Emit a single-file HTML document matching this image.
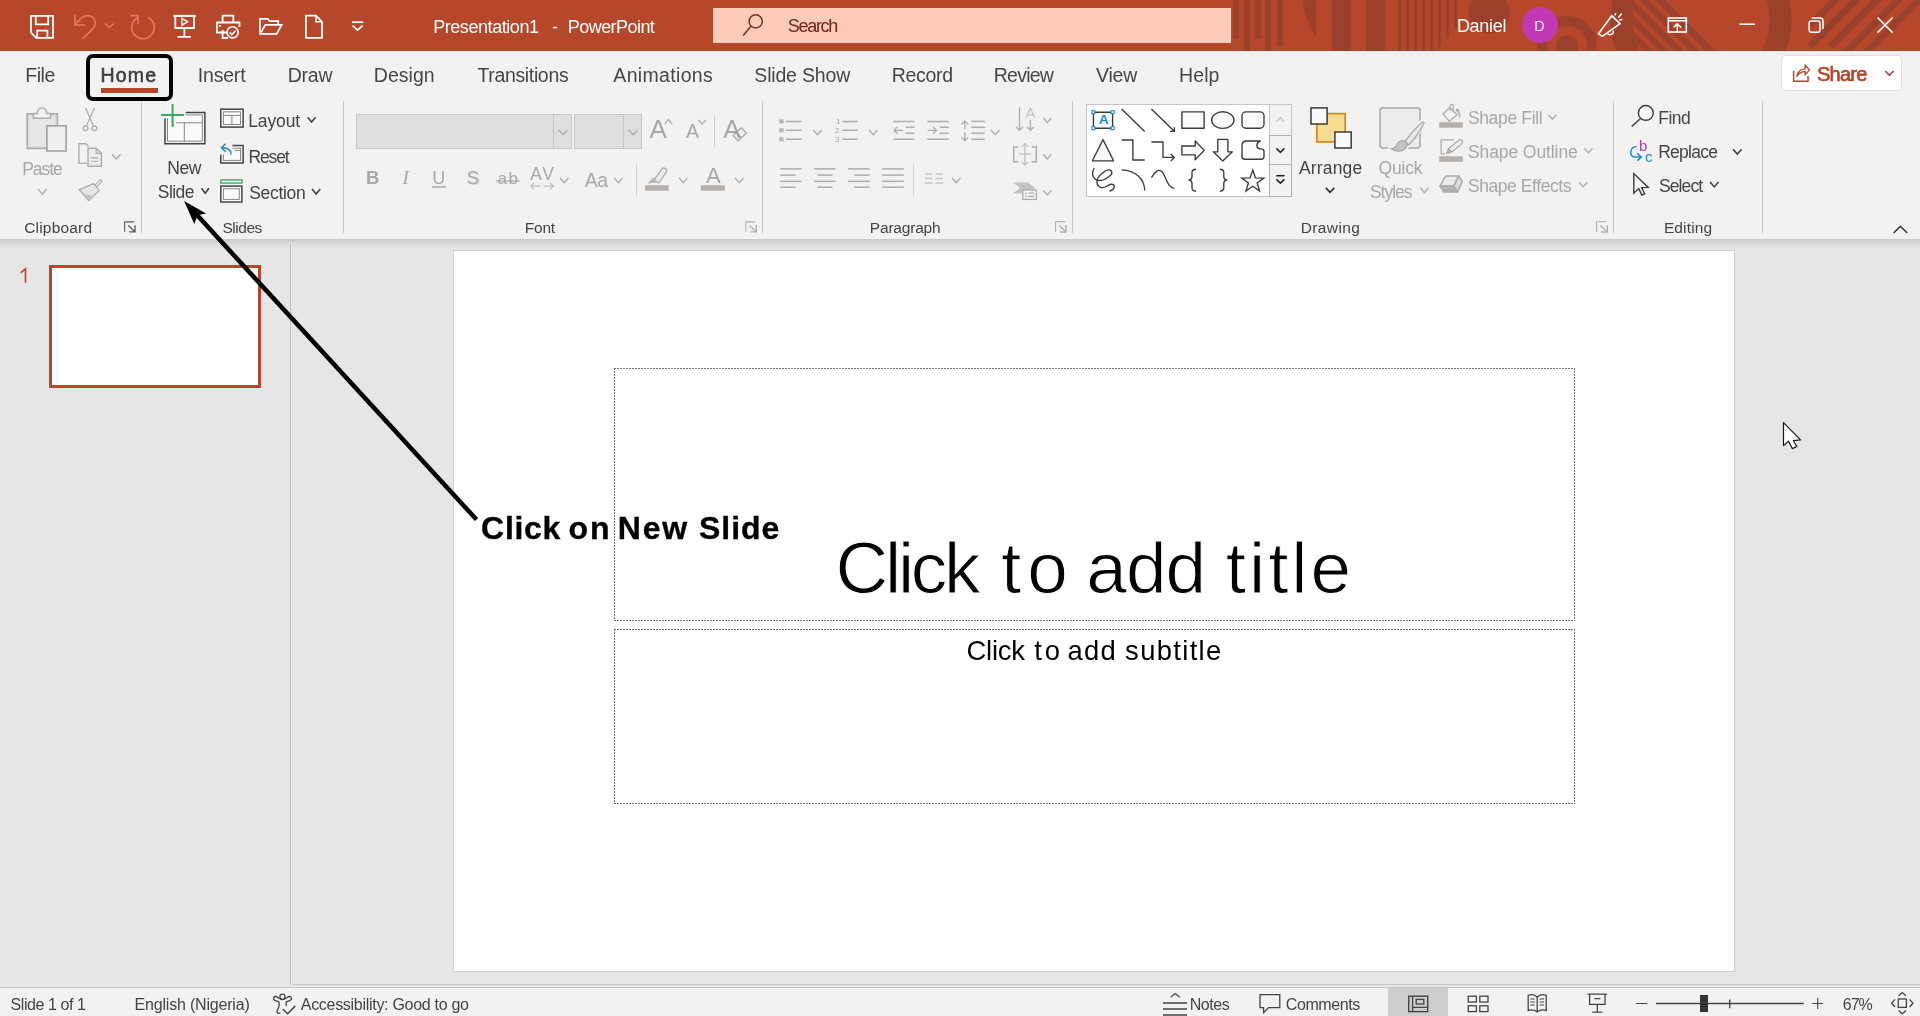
<!DOCTYPE html>
<html><head><meta charset="utf-8"><title>PowerPoint</title>
<style>
html,body{margin:0;padding:0;}
body{width:1920px;height:1016px;overflow:hidden;position:relative;background:#e6e6e6;font-family:'Liberation Sans',sans-serif;}
.a{position:absolute;}
.t{position:absolute;white-space:pre;line-height:1;}
#titlebar{left:0;top:0;width:1920px;height:51px;background:#b7472a;}
#search{left:713px;top:8px;width:518px;height:35px;background:#fdcbb8;}
#ribbon{left:0;top:51px;width:1920px;height:188px;background:#f3f2f1;}
#rshadow{left:0;top:239px;width:1920px;height:10px;background:linear-gradient(#cbc9c7,#d5d5d5 30%,#dedede 60%,#e6e6e6);}
.gsep{position:absolute;top:101px;width:1px;height:132px;background:#c8c6c4;}
.ssep{position:absolute;width:1px;background:#d2d0ce;}
#homebox{left:86px;top:54px;width:87px;height:47px;box-sizing:border-box;border:4px solid #000;border-radius:7px;}
#homeul{left:101px;top:88px;width:57px;height:5px;background:#b7472a;}
#share{left:1781px;top:55px;width:121px;height:36px;box-sizing:border-box;background:#fff;border:1px solid #e1dfdd;border-radius:4px;}
.combo{position:absolute;top:114px;height:35px;box-sizing:border-box;background:#e1dfdd;border:1px solid #c8c6c4;}
#gallery{left:1086px;top:104px;width:206px;height:93px;box-sizing:border-box;background:#fff;border:1px solid #c8c6c4;}
.gbtn{position:absolute;left:1269px;width:23px;box-sizing:border-box;background:#f3f2f1;border:1px solid #c8c6c4;}
#psep{left:290px;top:242px;width:1px;height:743px;background:#bcbcbc;box-shadow:-1px 0 0 #e9e9e9,1px 0 0 #e9e9e9;}
#hline{left:293px;top:984px;width:1627px;height:1px;background:#c6c6c6;}
#slide{left:453px;top:250px;width:1282px;height:722px;box-sizing:border-box;background:#fff;border:1px solid #cfcfcf;}
#thumb{left:49px;top:265px;width:212px;height:123px;box-sizing:border-box;background:#fff;border:3px solid #b7472a;}
#status{left:0;top:987px;width:1920px;height:29px;background:#f3f2f1;border-top:1px solid #c6c6c6;box-sizing:border-box;}
#viewsel{left:1388px;top:988px;width:60px;height:28px;background:#cfcdcb;}
svg{position:absolute;left:0;top:0;overflow:visible;}
</style></head>
<body>
<div class="a" id="titlebar"></div>
<svg class="a" width="1920" height="51" viewBox="0 0 1920 51" style="overflow:hidden">
<defs>
<clipPath id="cpA"><rect x="1290" y="0" width="26" height="51"/></clipPath>
<clipPath id="cpB"><polygon points="1390,0 1479,0 1436.2,51 1390,51"/></clipPath>
<clipPath id="cpC"><circle cx="1701" cy="20" r="68.5"/></clipPath>
</defs>
<g fill="#9b412b">
<rect x="1233" y="0" width="6" height="39"/>
<rect x="1244" y="0" width="6" height="51"/>
<rect x="1255" y="0" width="6" height="39"/>
<rect x="1265" y="0" width="6" height="51"/>
<rect x="1277" y="0" width="6" height="46"/>
<circle cx="1375" cy="-5" r="72.3" clip-path="url(#cpA)"/>
<rect x="1332" y="0" width="19" height="51"/><rect x="1366" y="0" width="19" height="51"/>
<g clip-path="url(#cpB)">
<rect x="1398.1" y="0" width="2.9" height="51"/>
<rect x="1406.1" y="0" width="2.9" height="51"/>
<rect x="1414.1" y="0" width="2.9" height="51"/>
<rect x="1422.1" y="0" width="2.9" height="51"/>
<rect x="1430.1" y="0" width="2.9" height="51"/>
<rect x="1438.1" y="0" width="2.9" height="51"/>
<rect x="1446.1" y="0" width="2.9" height="51"/>
<rect x="1454.1" y="0" width="2.9" height="51"/>
</g>
<circle cx="1489" cy="13" r="20.7"/>
<circle cx="1567" cy="46" r="11"/>
</g>
<circle cx="1567" cy="46" r="25" fill="none" stroke="#9b412b" stroke-width="10"/>
<circle cx="1701" cy="20" r="79.55" fill="none" stroke="#9b412b" stroke-width="22.1"/>
<g clip-path="url(#cpC)" fill="#9b412b">
<polygon points="1649.7,-5 1660.3,-5 1725.3,60 1714.7,60"/>
<polygon points="1634.4,-5 1643.1,-5 1708.1,60 1699.4,60"/>
<polygon points="1619.1,-5 1627.8,-5 1692.8,60 1684.1,60"/>
<polygon points="1603.8,-5 1612.5,-5 1677.5,60 1668.8,60"/>
<polygon points="1588.5,-5 1597.2,-5 1662.2,60 1653.5,60"/>
<polygon points="1573.2,-5 1581.9,-5 1646.9,60 1638.2,60"/>
</g>
<g fill="#9b412b">
<polygon points="1835,-5 1845,-5 1812.50,27.50 1807.50,22.50"/>
<polygon points="1856,-5 1866,-5 1811.75,49.25 1806.75,44.25"/>
<polygon points="1877,-5 1887,-5 1833.00,49.00 1828.00,44.00"/>
<polygon points="1898,-5 1908,-5 1843,60 1833,60"/>
<polygon points="1919,-5 1929,-5 1864,60 1854,60"/>
</g>
</svg>
<div class="a" id="search"></div>
<div class="a" style="left:1522px;top:7px;width:36px;height:36px;border-radius:50%;background:#c239b3"></div>
<div class="a" id="ribbon"></div>
<div class="a" id="rshadow"></div>
<div class="gsep" style="left:141px"></div>
<div class="gsep" style="left:343px"></div>
<div class="gsep" style="left:762px"></div>
<div class="gsep" style="left:1072px"></div>
<div class="gsep" style="left:1613px"></div>
<div class="gsep" style="left:1762px"></div>
<div class="ssep" style="left:714px;top:115px;height:33px"></div>
<div class="ssep" style="left:636px;top:164px;height:32px"></div>
<div class="ssep" style="left:913px;top:164px;height:32px"></div>
<div class="a" id="homeul"></div>
<div class="a" id="share"></div>
<div class="combo" style="left:356px;width:216px"></div><div class="ssep" style="left:553px;top:115px;height:33px;background:#c8c6c4"></div>
<div class="combo" style="left:574px;width:68px"></div><div class="ssep" style="left:623px;top:115px;height:33px;background:#c8c6c4"></div>
<div class="a" id="gallery"></div>
<div class="gbtn" style="top:104px;height:32px"></div><div class="gbtn" style="top:135px;height:30px;border-color:#b3b0ad"></div><div class="gbtn" style="top:164px;height:33px;border-color:#b3b0ad"></div>
<div class="a" id="psep"></div><div class="a" id="hline"></div>
<div class="a" id="slide"></div>
<div class="a" id="thumb"></div>
<div class="a" id="status"></div><div class="a" id="viewsel"></div>
<svg class="a" width="1920" height="1016" viewBox="0 0 1920 1016" fill="none" stroke-linecap="butt" stroke-linejoin="miter">
<g stroke="#fff" stroke-width="1.8">
<path d="M31,15.9 H53 V37.9 H36.2 L31,32.7 Z"/>
<path d="M35.8,16 V24.3 H48.2 V16"/>
<path d="M37.2,38 V30.6 H47.4 V38"/>
<path d="M173.3,15.9 H195.8" stroke-width="2"/>
<path d="M175.3,16 V28 H194 V16"/>
<path d="M184.4,28 V36.9 M177.5,36.9 H190.9"/>
<path d="M181.9,18.4 L187.6,21.8 L181.9,25.2 Z" stroke-width="1.4"/>
<path d="M222.6,22.4 V15.7 H233.3 V22.4"/>
<path d="M227,32.5 H216.9 V22.5 H239.5 V27"/>
<path d="M222.6,30 V38 H228"/>
<circle cx="232.6" cy="32.3" r="5.6" stroke-width="1.6"/>
<path d="M229.6,32.4 L231.8,34.6 L235.8,30.4" stroke-width="1.5"/>
<path d="M259.9,33.6 V18.9 H267.8 L269.6,21.2 H278.2 V24.4"/>
<path d="M260.2,33.9 L265.3,24.9 H281.6 L276.7,33.9 Z"/>
<path d="M305.9,15.7 H316 L322,21.8 V37.9 H305.9 Z"/>
<path d="M316,15.7 V21.8 H322" stroke-width="1.5"/>
<path d="M352,22.2 H363.2" stroke-width="1.7"/>
<path d="M352.6,25.6 L357.6,30.2 L362.6,25.6" stroke-width="1.6"/>
</g>
<rect x="219" y="25" width="1.8" height="1.8" fill="#fff"/>
<g stroke="#e9755e" stroke-width="1.7">
<path d="M75,14.8 V25 H84.8"/>
<path d="M75.6,24.4 C79.5,18.6 83.6,15.6 87.9,15.6 C92.2,15.6 95.3,19 95.3,23 C95.3,26.3 93.3,28.6 90.8,30.9 L82.4,38.8"/>
<path d="M105,23.4 L109.3,27.8 L113.6,23.4" stroke-width="1.5"/>
<path d="M130.2,15.6 H138 V23.8"/>
<path d="M138.3,17.3 A11.2,11.2 0 1 0 148.3,17.6"/>
</g>
<g stroke="#7a2d1c" stroke-width="1.5"><circle cx="755.7" cy="21.4" r="6.6"/><path d="M751,26.2 L743.2,35.4"/></g>
<g stroke="#fff" stroke-width="1.6">
<path d="M1598.5,33.8 L1611.8,15.8 L1620,23.6 L1602.4,36.4 Z"/>
<path d="M1613.2,30.6 A3.2,3.2 0 0 1 1607.3,33" stroke-width="1.4"/>
<path d="M1614.7,15.4 L1615.9,13 M1618.4,17.4 L1621.8,13.4 M1619.2,20 L1622.4,19.4" stroke-width="1.5"/>
<rect x="1668.3" y="18" width="18" height="14"/>
<path d="M1668.3,20.8 H1686.3"/>
<path d="M1677.3,24 V32 M1673.6,27.4 L1677.3,23.7 L1681,27.4" stroke-width="1.5"/>
<path d="M1739.5,24.2 H1755" stroke-width="1.5"/>
<rect x="1809.1" y="21" width="11" height="11.2" rx="2.2" stroke-width="1.5"/>
<path d="M1811.8,18 H1820 Q1823,18 1823,21 V29.2" stroke-width="1.5"/>
<path d="M1877.5,17.5 L1892.6,32.6 M1892.6,17.5 L1877.5,32.6" stroke-width="1.5"/>
</g>
<g stroke="#b7472a" stroke-width="1.5">
<path d="M1793.6,70.8 V81.3 H1808 V76"/>
<path d="M1796.6,76.6 C1797.6,71.6 1800.6,69 1805.2,68.8 V65.2 L1809.6,70 L1805.2,74.6 V71.6 C1801.4,71.6 1798.6,73.2 1796.6,76.6 Z" stroke-width="1.3"/>
<path d="M1885.2,71 L1889.4,75.4 L1893.6,71" stroke-width="1.6"/>
</g>
<rect x="27.2" y="113.8" width="30.2" height="34.6" fill="#dfdddb" stroke="#aeacaa" stroke-width="1.6"/>
<rect x="29.8" y="116.4" width="25" height="29.4" fill="#e9e8e6"/>
<path d="M33.4,118.2 V113.4 H37.4 V112.5 A4.6,4.6 0 0 1 46.6,112.5 V113.4 H50.6 V118.2 Z" fill="#f3f2f1" stroke="#aeacaa" stroke-width="1.5"/>
<rect x="46.9" y="125.8" width="19.2" height="25.2" fill="#efeeed" stroke="#a6a4a2" stroke-width="1.7"/>
<path d="M38.20,189.30 L42.35,194.10 L46.50,189.30" stroke="#aeacaa" stroke-width="1.4"/>
<g stroke="#aeacaa" stroke-width="1.3"><path d="M85.6,108 L93.4,125.8 M94.4,108 L86.6,125.8"/><circle cx="85.6" cy="128.2" r="2.4"/><circle cx="94.4" cy="128.2" r="2.4"/></g>
<g stroke="#aeacaa" stroke-width="1.4">
<path d="M87,163.4 H78.9 V143.8 H86 L88.6,146.4"/>
<path d="M88,148.2 H96.2 L101.4,153.4 V166.2 H88 Z" fill="#efeeed"/>
<path d="M96.2,148.2 V153.4 H101.4" stroke-width="1.2"/>
<path d="M90.8,157.9 H98.2 M90.8,161.3 H98.2" stroke-width="1.1"/>
</g>
<path d="M112.00,154.20 L116.30,159.00 L120.60,154.20" stroke="#aeacaa" stroke-width="1.4"/>
<g stroke="#aeacaa">
<path d="M94.4,187.4 L100.6,181" stroke-width="3.6" stroke-linecap="round"/>
<path d="M94.4,187.4 L100.6,181" stroke="#efeeed" stroke-width="1.4" stroke-linecap="round"/>
<path d="M79.2,189.8 L93.6,183.6 L99.2,190.6 L88.6,200.6 Z" fill="#e6e5e3" stroke-width="1.3" stroke-linejoin="round"/>
<path d="M81.6,192.6 L92.6,196.4 L88.6,200.2 Z" fill="#c8c6c4" stroke="none"/>
</g>
<path d="M124.65,231.80 V221.85 H134.10" stroke="#5a5856" stroke-width="1.1"/><path d="M128.30,225.50 L134.80,231.70" stroke="#5a5856" stroke-width="1.3"/><path d="M129.10,231.90 H135.00 V225.30" stroke="#5a5856" stroke-width="1.4"/>
<rect x="166.9" y="114.4" width="35.8" height="27" fill="#fafafa"/>
<path d="M185.6,112.4 H204.9 V143.7 H165 V118.4" stroke="#444444" stroke-width="1.5"/>
<path d="M185.6,114.9 H202.4 V141.2 H167.5 V118.4" stroke="#8a8886" stroke-width="1"/>
<path d="M176,122.8 H202.4 M184.3,122.8 V141.2" stroke="#8a8886" stroke-width="1"/>
<path d="M172.6,104.1 V126.9 M161.3,114.9 H183.9" stroke="#37a660" stroke-width="2"/>
<path d="M201.50,188.20 L205.25,193.20 L209.00,188.20" stroke="#444444" stroke-width="1.6"/>
<rect x="220.80" y="109.20" width="22.30" height="17.90" fill="#fafafa" stroke="#444444" stroke-width="1.5"/><rect x="223.40" y="111.80" width="17.10" height="12.70" stroke="#8a8886" stroke-width="1"/>
<path d="M223.4,115.4 H240.5 M231.9,115.4 V124.5" stroke="#8a8886" stroke-width="1"/>
<path d="M307.60,117.20 L311.60,122.00 L315.60,117.20" stroke="#444444" stroke-width="1.6"/>
<path d="M232,145.5 H243.1 V163 H220.8 V154" stroke="#444444" stroke-width="1.5" fill="none"/>
<rect x="223.4" y="148.2" width="17.1" height="12.2" fill="#fafafa" stroke="#8a8886" stroke-width="1"/>
<rect x="220" y="143" width="12.4" height="11.6" fill="#f3f2f1"/>
<path d="M234.4,150.4 H240.2" stroke="#8a8886" stroke-width="1"/>
<path d="M231.2,154.6 C231.2,150.6 228.2,147.8 222,147.8 M225.6,143.8 L221.4,147.8 L225.6,151.8" stroke="#1e8ad2" stroke-width="1.5"/>
<rect x="220.8" y="179.9" width="21.2" height="3.2" fill="#fff" stroke="#37a660" stroke-width="1.3"/>
<rect x="220.80" y="186.10" width="21.10" height="15.90" fill="#fafafa" stroke="#444444" stroke-width="1.5"/><rect x="223.40" y="188.70" width="15.90" height="10.70" stroke="#8a8886" stroke-width="1"/>
<path d="M312.00,188.90 L316.15,194.00 L320.30,188.90" stroke="#444444" stroke-width="1.6"/>
<path d="M559.00,130.00 L563.25,134.70 L567.50,130.00" stroke="#aeacaa" stroke-width="1.4"/>
<path d="M628.90,130.00 L633.15,134.70 L637.40,130.00" stroke="#aeacaa" stroke-width="1.4"/>
<path d="M664.7,124.1 L668.5,119.5 L672.3,124.1" stroke="#aeacaa" stroke-width="1.3"/>
<path d="M698.40,120.00 L702.20,124.10 L706.00,120.00" stroke="#aeacaa" stroke-width="1.3"/>
<path d="M733.2,135.6 L741.4,127.8 L746.4,133 L738.2,140.8 Z" fill="#f3f2f1" stroke="#aeacaa" stroke-width="1.4"/>
<path d="M736.6,132.6 L741.6,137.8" stroke="#aeacaa" stroke-width="1.3"/>
<path d="M432.2,187 H445.9" stroke="#aeacaa" stroke-width="1.6"/>
<path d="M495.9,181 H519.7" stroke="#aeacaa" stroke-width="1.3"/>
<path d="M530.8,186.1 H540.8 M534,183 L530.8,186.1 L534,189.2 M543.4,186.1 H553.4 M550.2,183 L553.4,186.1 L550.2,189.2" stroke="#bebcba" stroke-width="1.2"/>
<path d="M560.00,177.90 L564.25,182.70 L568.50,177.90" stroke="#aeacaa" stroke-width="1.4"/>
<path d="M614.00,177.90 L618.35,182.70 L622.70,177.90" stroke="#aeacaa" stroke-width="1.4"/>
<path d="M654.2,179.6 L661.8,169.2 A2.6,2.6 0 0 1 666,172.6 L658.8,183 Z" fill="#eeedec" stroke="#aeacaa" stroke-width="1.3" stroke-linejoin="round"/>
<path d="M647.4,183.6 L653.2,177.6 L657.4,182.4 Z" fill="#b8b6b4"/>
<rect x="645.1" y="185.2" width="23.7" height="5.5" fill="#b3b0ad"/>
<path d="M679.20,177.90 L683.30,182.70 L687.40,177.90" stroke="#aeacaa" stroke-width="1.4"/>
<rect x="700.9" y="185.2" width="24" height="5.5" fill="#b3b0ad"/>
<path d="M735.00,177.90 L739.25,182.70 L743.50,177.90" stroke="#aeacaa" stroke-width="1.4"/>
<path d="M745.85,231.80 V221.85 H755.40" stroke="#b3b0ad" stroke-width="1.1"/><path d="M749.50,225.50 L756.10,231.70" stroke="#b3b0ad" stroke-width="1.3"/><path d="M750.30,231.90 H756.30 V225.30" stroke="#b3b0ad" stroke-width="1.4"/>
<g stroke="#aeacaa" stroke-width="1.5">
<rect x="779.2" y="119.30" width="4.4" height="4.2" fill="#b8b6b4" stroke="none"/>
<path d="M786,121.40 H801.5 M842.4,121.40 H857.6"/>
<rect x="779.2" y="128.20" width="4.4" height="4.2" fill="#b8b6b4" stroke="none"/>
<path d="M786,130.30 H801.5 M842.4,130.30 H857.6"/>
<rect x="779.2" y="137.20" width="4.4" height="4.2" fill="#b8b6b4" stroke="none"/>
<path d="M786,139.30 H801.5 M842.4,139.30 H857.6"/>
<path d="M893.2,121.4 H914.5 M893.2,139.3 H914.5 M905.6,127.3 H914.5 M905.6,133.2 H914.5"/>
<path d="M894,130.3 H902.8 M897.4,126.9 L894,130.3 L897.4,133.7" stroke-width="1.3"/>
<path d="M927.3,121.4 H948.7 M927.3,139.3 H948.7 M939.7,127.3 H948.7 M939.7,133.2 H948.7"/>
<path d="M927.6,130.3 H936.4 M933,126.9 L936.4,130.3 L933,133.7" stroke-width="1.3"/>
<path d="M971.3,121.40 H984.8"/>
<path d="M971.3,127.30 H984.8"/>
<path d="M971.3,133.20 H984.8"/>
<path d="M971.3,139.30 H984.8"/>
<path d="M964.8,121 V129.6 M964.8,132.3 V140.8 M961.4,124.4 L964.8,121 L968.2,124.4 M961.4,137.4 L964.8,140.8 L968.2,137.4" stroke-width="1.3"/>
<path d="M780.2,168.90 H801.50"/>
<path d="M814.2,168.90 H835.6"/>
<path d="M848.10,168.90 H869.7"/>
<path d="M882.1,168.90 H903.8"/>
<path d="M780.2,175.10 H795.60"/>
<path d="M817.4,175.10 H832.5"/>
<path d="M854.30,175.10 H869.7"/>
<path d="M882.1,175.10 H903.8"/>
<path d="M780.2,181.30 H801.50"/>
<path d="M814.2,181.30 H835.6"/>
<path d="M848.10,181.30 H869.7"/>
<path d="M882.1,181.30 H903.8"/>
<path d="M780.2,187.20 H795.60"/>
<path d="M817.4,187.20 H832.5"/>
<path d="M854.30,187.20 H869.7"/>
<path d="M882.1,187.20 H903.8"/>
</g>
<g stroke="#c8c6c4" stroke-width="1.5">
<path d="M924.8,174.10 H932.4 M935.5,174.10 H943"/>
<path d="M924.8,178.60 H932.4 M935.5,178.60 H943"/>
<path d="M924.8,183.10 H932.4 M935.5,183.10 H943"/>
</g>
<path d="M813.20,130.00 L817.45,134.70 L821.70,130.00" stroke="#aeacaa" stroke-width="1.4"/>
<path d="M869.00,130.00 L873.25,134.70 L877.50,130.00" stroke="#aeacaa" stroke-width="1.4"/>
<path d="M991.00,130.00 L995.25,134.70 L999.50,130.00" stroke="#aeacaa" stroke-width="1.4"/>
<path d="M952.00,177.90 L956.20,182.70 L960.40,177.90" stroke="#aeacaa" stroke-width="1.4"/>
<g stroke="#aeacaa" stroke-width="1.3">
<path d="M1019.5,107.3 V130.4 M1015.9,126.8 L1019.5,130.4 L1023.1,126.8"/>
<path d="M1030.4,119.8 V130.4 M1026.9,126.9 L1030.4,130.4 L1033.9,126.9"/>
<path d="M1025.9,118 L1030.4,108.2 L1034.9,118 M1027.4,114.8 H1033.4" stroke="#c2c0be" stroke-width="1.2"/>
<path d="M1018.3,146.9 H1013.7 V161.7 H1018.3 M1031.7,146.9 H1036.3 V161.7 H1031.7" stroke-width="1.5"/>
<path d="M1019,154.2 H1031.2 M1024.9,143.6 V165.2 M1021.6,146.9 L1024.9,143.6 L1028.2,146.9 M1021.6,161.9 L1024.9,165.2 L1028.2,161.9" stroke="#c2c0be"/>
</g>
<path d="M1013.2,182.4 H1028 L1035.2,187.9 L1028,193.4 H1013.2 L1019.9,187.9 Z" fill="#c4c2c0"/>
<rect x="1022.8" y="190" width="13.6" height="9.4" fill="#f3f2f1" stroke="#aeacaa" stroke-width="1.3"/>
<path d="M1025.2,193.2 H1027 M1028.6,193.2 H1034 M1025.2,196.3 H1027 M1028.6,196.3 H1034" stroke="#aeacaa" stroke-width="1.2"/>
<path d="M1043.30,117.80 L1047.35,122.60 L1051.40,117.80" stroke="#aeacaa" stroke-width="1.4"/>
<path d="M1043.30,154.10 L1047.35,158.90 L1051.40,154.10" stroke="#aeacaa" stroke-width="1.4"/>
<path d="M1043.30,190.40 L1047.35,195.00 L1051.40,190.40" stroke="#aeacaa" stroke-width="1.4"/>
<path d="M1055.55,231.90 V221.65 H1065.10" stroke="#b3b0ad" stroke-width="1.1"/><path d="M1059.20,225.30 L1065.80,231.80" stroke="#b3b0ad" stroke-width="1.3"/><path d="M1060.00,232.00 H1066.00 V225.10" stroke="#b3b0ad" stroke-width="1.4"/>
<g stroke="#3b3a39" stroke-width="1.35" stroke-linejoin="round">
<rect x="1093.4" y="112.2" width="19.2" height="16" fill="#fafafa"/>
<path d="M1121.6,108.9 L1144.7,131.5"/>
<path d="M1151.4,108.9 L1174.3,131.3 M1174.4,127.2 V131.4 H1170"/>
<rect x="1181.9" y="111.9" width="22.2" height="16.3" fill="#fafafa"/>
<ellipse cx="1222.8" cy="120.1" rx="11.2" ry="8.3" fill="#fafafa"/>
<rect x="1242" y="111.9" width="22" height="16.3" rx="4" fill="#fafafa"/>
<path d="M1103,139.6 L1092.4,160.8 H1113.6 Z" fill="#fafafa"/>
<path d="M1121.6,140 H1132.9 V160 H1144.7"/>
<path d="M1151.4,142 H1163 V157.4 H1174.2 M1170.8,154 L1174.3,157.4 L1170.8,160.9"/>
<path d="M1181.9,146 H1195.2 V141 L1204.2,150.4 L1195.2,159.8 V154.9 H1181.9 Z" fill="#fafafa"/>
<path d="M1217.8,139.3 H1227.9 V151.8 H1232.4 L1222.8,160.9 L1213.3,151.8 H1217.8 Z" fill="#fafafa"/>
<path d="M1246.4,141 H1260.2 C1256.4,142.4 1255.4,147.6 1259.8,148.8 H1261.4 Q1264,148.8 1264,151.6 V156.4 Q1264,159.2 1261.2,159.2 H1244.8 Q1242,159.2 1242,156.4 V145.6 Q1242,141 1246.4,141 Z" fill="#fafafa"/>
<path d="M1093.9,168.5 C1092.6,171.2 1092.2,173 1092.7,174.7 C1093.4,177.6 1094.8,179.4 1096.9,180.1 C1098.4,180.6 1099.8,180.6 1101.3,180.4 C1104.2,180 1106.8,178.4 1108.7,176.8 C1110.6,175.2 1112,174.4 1111.9,173 C1111.8,171.2 1110.6,169.8 1108.7,169.9 C1106.6,170 1104.6,171.2 1102.8,172.7 C1100.8,174.4 1099,175.8 1098,177.7 C1097.2,179.2 1096.8,180.6 1096.9,182.1 C1097,184 1097.8,185.6 1099.2,186.5 C1100.2,187.2 1101,187.6 1102.2,187.6 C1104,187.6 1105.6,186.8 1107.2,186 C1108.8,185.2 1110,184.2 1111.6,184.2 C1113,184.2 1114.2,185 1114.3,186.3 C1114.4,187.4 1113.8,188.4 1113.1,189.2 C1112.2,190.2 1111.2,190.6 1110.1,191" stroke-linecap="round"/>
<path d="M1121.6,169.8 C1135.4,170.4 1144.6,178.6 1144.7,190.6"/>
<path d="M1151.4,177.8 C1154.6,171.6 1159,168 1162.4,172.2 C1166.4,177.2 1167.4,188 1174.5,188.4"/>
<path d="M1196,169.2 C1193.2,169.2 1192,170.2 1192,172.6 V176.6 C1192,178.6 1191,179.8 1189,180 C1191,180.2 1192,181.4 1192,183.4 V187.8 C1192,190.2 1193.2,191.2 1196,191.2"/>
<path d="M1219.8,169.2 C1222.6,169.2 1223.8,170.2 1223.8,172.6 V176.6 C1223.8,178.6 1224.8,179.8 1226.8,180 C1224.8,180.2 1223.8,181.4 1223.8,183.4 V187.8 C1223.8,190.2 1222.6,191.2 1219.8,191.2"/>
<polygon points="1252.80,170.00 1255.50,177.88 1263.83,178.02 1257.17,183.02 1259.62,190.98 1252.80,186.20 1245.98,190.98 1248.43,183.02 1241.77,178.02 1250.10,177.88" fill="#fafafa" stroke-linejoin="miter"/>
</g>
<rect x="1091.90" y="110.70" width="3" height="3" fill="#fff" stroke="#1e8ad2" stroke-width="1.1"/>
<rect x="1111.10" y="110.70" width="3" height="3" fill="#fff" stroke="#1e8ad2" stroke-width="1.1"/>
<rect x="1091.90" y="126.70" width="3" height="3" fill="#fff" stroke="#1e8ad2" stroke-width="1.1"/>
<rect x="1111.10" y="126.70" width="3" height="3" fill="#fff" stroke="#1e8ad2" stroke-width="1.1"/>
<path d="M1276.6,121.8 L1280.4,117.6 L1284.2,121.8" stroke="#c8c6c4" stroke-width="1.4"/>
<path d="M1276.4,148.4 L1280.4,152.4 L1284.4,148.4" stroke="#252423" stroke-width="1.6"/>
<path d="M1276.2,175.7 H1284.6" stroke="#252423" stroke-width="1.6"/>
<path d="M1276.4,179.4 L1280.4,183.2 L1284.4,179.4" stroke="#252423" stroke-width="1.6"/>
<rect x="1316.9" y="113.6" width="28.3" height="28.3" fill="#f8dc92" stroke="#e17c05" stroke-width="1.6"/>
<rect x="1311" y="107.9" width="16.1" height="16.1" fill="#fafafa" stroke="#3b3a39" stroke-width="1.5"/>
<rect x="1334.9" y="132" width="16.3" height="16" fill="#fafafa" stroke="#3b3a39" stroke-width="1.5"/>
<path d="M1325.8,187.8 L1330,192.4 L1334.3,187.8" stroke="#252423" stroke-width="1.6"/>
<rect x="1380.1" y="108.1" width="39.9" height="39.9" rx="2.4" fill="#edecec" stroke="#aaa8a6" stroke-width="1.5"/>
<path d="M1423.6,122.6 L1407,143 M1405,146 L1392,149.6" stroke="#f3f2f1" stroke-width="8" stroke-linecap="round"/>
<path d="M1422.2,122.2 C1423.6,121.4 1424.4,122.6 1423.6,124 C1419.6,132 1414,139.8 1408.6,145 L1404.8,141.6 C1409.4,135.4 1415.6,127.6 1422.2,122.2 Z" fill="#e9e8e6" stroke="#aaa8a6" stroke-width="1.3"/>
<path d="M1406,141.9 C1402,139.5 1398.4,141 1397,144.4 C1396,147 1394,148.4 1391,148.5 C1395,151.6 1401,152 1404.6,149 C1406.8,147.2 1408,144.6 1406,141.9 Z" fill="#c6c4c2" stroke="#aaa8a6" stroke-width="1.2"/>
<path d="M1420.30,187.70 L1424.35,192.60 L1428.40,187.70" stroke="#aeacaa" stroke-width="1.4"/>
<g stroke="#aeacaa" stroke-width="1.3" stroke-linejoin="round">
<path d="M1443,113.9 L1449.8,107.6 L1457,114.8 L1449.4,121.2 Z"/>
<path d="M1450.2,110.8 V105.9 A1.5,1.5 0 0 1 1453.2,105.9 V112.2"/>
<path d="M1456.2,110.4 C1458.6,111.4 1459.8,114 1459.6,117.6 M1456.4,109.2 L1459.4,111.2" stroke-width="1.5"/>
<path d="M1454.2,139.9 H1441.1 V153.8 H1444.8"/>
<path d="M1446.9,153.5 L1448.6,148.6 L1458.9,140.2 A2.3,2.3 0 0 1 1462.1,143.4 L1451.8,152 Z" fill="#efeeed"/>
<path d="M1446.9,153.5 L1448.6,148.6 L1451.8,152 Z" fill="#b8b6b4"/>
<path d="M1445.8,175.9 H1458.6 L1453.7,186.1 H1439.9 Z" fill="#edecec" stroke-width="1.5"/>
<path d="M1458.6,175.9 L1462.4,181.2 L1457.6,192 L1453.7,186.1 Z" fill="#dddbd9" stroke-width="1.5"/>
<path d="M1439.9,186.1 H1453.7 L1457.6,192 H1443.8 Z" fill="#b5b3b1" stroke-width="1.5"/>
</g>
<rect x="1439.2" y="122.2" width="23.6" height="5.5" fill="#b3b0ad"/>
<rect x="1439.2" y="156.3" width="23.6" height="5.5" fill="#b3b0ad"/>
<path d="M1548.30,114.60 L1552.35,119.30 L1556.40,114.60" stroke="#aeacaa" stroke-width="1.4"/>
<path d="M1584.30,148.10 L1588.40,152.90 L1592.50,148.10" stroke="#aeacaa" stroke-width="1.4"/>
<path d="M1579.10,182.20 L1583.25,186.80 L1587.40,182.20" stroke="#aeacaa" stroke-width="1.4"/>
<path d="M1596.55,231.90 V221.75 H1606.40" stroke="#b3b0ad" stroke-width="1.1"/><path d="M1600.20,225.40 L1607.10,231.80" stroke="#b3b0ad" stroke-width="1.3"/><path d="M1601.00,232.00 H1607.30 V225.20" stroke="#b3b0ad" stroke-width="1.4"/>
<g stroke="#3b3a39" stroke-width="1.4">
<circle cx="1645.8" cy="112.9" r="7.4" fill="#fafafa"/>
<path d="M1640.6,118.4 L1631.6,126.6"/>
<path d="M1633.8,173.6 V193.2 L1638.8,188.6 L1641.8,195 L1644.6,193.8 L1641.6,187.6 L1648.2,187.4 Z" fill="#fafafa" stroke-linejoin="miter"/>
</g>
<path d="M1636.6,146.6 C1630.2,146.8 1628.6,155.4 1634.4,157 H1641 M1637.4,153.4 L1641.2,157 L1637.4,160.6" stroke="#1e8ad2" stroke-width="1.5"/>
<path d="M1733.00,149.20 L1737.30,154.10 L1741.60,149.20" stroke="#3b3a39" stroke-width="1.5"/>
<path d="M1710.10,182.00 L1714.30,186.90 L1718.50,182.00" stroke="#3b3a39" stroke-width="1.5"/>
<path d="M1893.6,233 L1900.4,226.2 L1907.2,233" stroke="#323130" stroke-width="1.5"/>
<g stroke="#6f6f6f" stroke-width="1" stroke-dasharray="2 1" shape-rendering="crispEdges">
<path d="M614,368.5 H1575 M614,620.5 H1575 M614.5,368 V621 M1574.5,368 V621"/>
<path d="M614,629.5 H1575 M614,803.5 H1575 M614.5,629 V804 M1574.5,629 V804"/>
</g>
<path d="M476.5,519.6 L197.9,216" stroke="#000" stroke-width="4.5"/>
<path d="M184.1,201 L206.1,213.4 L199.6,214.7 L196.4,218.2 L194.3,224.1 Z" fill="#000"/>
<path d="M20.6,272.9 L25.5,268.9 V282.8" stroke="#c8452a" stroke-width="1.7"/>
<path d="M1783.5,422.6 V445.6 L1788.5,441.2 L1792.3,448.6 L1796.8,446.5 L1793.3,440.7 L1800.6,439.9 Z" fill="#fff" stroke="#15151f" stroke-width="1.2" stroke-linejoin="round"/>
<g stroke="#444444" stroke-width="1.3">
<circle cx="282.5" cy="996.8" r="2.6"/>
<path d="M279,1001.8 L275,1000.4 C272.6,999.4 273.2,996.3 275.7,996.5 C277.7,996.7 279.6,999.6 282.5,999.6 C285.4,999.6 287.3,996.7 289.3,996.5 C291.8,996.3 292.4,999.4 290,1000.4 L286.2,1001.8 V1006.2" stroke-linejoin="round"/>
<path d="M279,1001.8 C279.5,1004 279.4,1005.6 278.6,1007.6 C277.6,1010 276.2,1011.3 277.2,1012.6 C278,1013.7 279.5,1013.5 280.4,1012.6"/>
<path d="M282.9,1008.9 L287.6,1013.7 L295.3,1005.9" stroke-width="1.5"/>
<path d="M1170.6,997.2 L1175.2,993.6 L1179.8,997.2"/>
<path d="M1163,1003 H1187 M1163,1009 H1187 M1163,1015 H1187" stroke-width="1.5"/>
<path d="M1260,994.6 H1279.8 V1007.6 H1268.6 L1263.6,1012.6 V1007.6 H1260 Z"/>
<rect x="1408.7" y="996.2" width="19" height="15.4" stroke-width="1.4"/>
<path d="M1412.6,996.2 V1011.6 M1412.6,1007.4 H1427.6"/>
<rect x="1416.2" y="999.4" width="7.6" height="4.6"/>
<rect x="1468.2" y="996.2" width="8.2" height="5.8"/>
<rect x="1468.2" y="1005.8" width="8.2" height="5.8"/>
<rect x="1479.8" y="996.2" width="8.2" height="5.8"/>
<rect x="1479.8" y="1005.8" width="8.2" height="5.8"/>
<path d="M1537.2,997 C1534,994.4 1530.6,994.4 1528.2,995.4 V1010.6 C1530.6,1009.6 1534,1009.6 1537.2,1012 C1540.4,1009.6 1543.8,1009.6 1546.2,1010.6 V995.4 C1543.8,994.4 1540.4,994.4 1537.2,997 Z M1537.2,997 V1012"/>
<path d="M1530.4,999 H1534.8 M1530.4,1002 H1534.8 M1530.4,1005 H1534.8 M1539.6,999 H1544 M1539.6,1002 H1544 M1539.6,1005 H1544" stroke-width="1"/>
<path d="M1587.6,994.2 H1607 M1589.6,994.4 V1004.4 H1605 V994.4 M1597.3,1004.4 V1012.2 M1592.2,1012.2 H1602.4 M1594.4,998.6 H1600.4"/>
<path d="M1636,1003.5 H1647.2 M1812.2,1003.5 H1823.2 M1817.7,998 V1009" stroke-width="1.1"/>
<path d="M1656,1003.5 H1803.8 M1729.7,999.6 V1008.2" stroke-width="1.4"/>
<rect x="1898.2" y="999" width="8.2" height="8.4"/>
<path d="M1898.6,995.8 L1902.3,992.6 L1906,995.8 M1898.6,1010.6 L1902.3,1013.8 L1906,1010.6 M1895,999.4 L1891.6,1003.2 L1895,1007 M1909.6,999.4 L1913,1003.2 L1909.6,1007"/>
</g>
<rect x="1700" y="995" width="8" height="17" fill="#333"/>
</svg>
<div class="a" style="left:0;top:0;width:1920px;height:1016px;will-change:transform">
<span class="t" style="left:433.20px;top:18.00px;font-size:18px;letter-spacing:-0.442px;color:#fff;">Presentation1</span>
<span class="t" style="left:552.00px;top:18.00px;font-size:18px;letter-spacing:0px;color:#fff;">-</span>
<span class="t" style="left:567.80px;top:18.00px;font-size:18px;letter-spacing:-0.556px;color:#fff;">PowerPoint</span>
<span class="t" style="left:787.80px;top:17.00px;font-size:18px;letter-spacing:-1.3px;color:#70261a;">Search</span>
<span class="t" style="left:1456.90px;top:17.00px;font-size:18px;letter-spacing:-0.3px;color:#fff;">Daniel</span>
<span class="t" style="left:1534.20px;top:18.70px;font-size:14.5px;letter-spacing:0px;color:#fbe9f8;">D</span>
<span class="t" style="left:25.30px;top:66.00px;font-size:19.5px;letter-spacing:-0.467px;color:#484644;">File</span>
<span class="t" style="left:100.50px;top:66.00px;font-size:19.5px;letter-spacing:1.167px;color:#3b3a39;-webkit-text-stroke:0.6px #444;">Home</span>
<span class="t" style="left:197.80px;top:66.00px;font-size:19.5px;letter-spacing:-0.2px;color:#484644;">Insert</span>
<span class="t" style="left:287.80px;top:66.00px;font-size:19.5px;letter-spacing:-0.267px;color:#484644;">Draw</span>
<span class="t" style="left:373.80px;top:66.00px;font-size:19.5px;letter-spacing:0.02px;color:#484644;">Design</span>
<span class="t" style="left:477.40px;top:66.00px;font-size:19.5px;letter-spacing:-0.34px;color:#484644;">Transitions</span>
<span class="t" style="left:613.30px;top:66.00px;font-size:19.5px;letter-spacing:0.333px;color:#484644;">Animations</span>
<span class="t" style="left:754.30px;top:66.00px;font-size:19.5px;letter-spacing:-0.178px;color:#484644;">Slide Show</span>
<span class="t" style="left:891.70px;top:66.00px;font-size:19.5px;letter-spacing:-0.28px;color:#484644;">Record</span>
<span class="t" style="left:993.70px;top:66.00px;font-size:19.5px;letter-spacing:-0.74px;color:#484644;">Review</span>
<span class="t" style="left:1096.00px;top:66.00px;font-size:19.5px;letter-spacing:-0.233px;color:#484644;">View</span>
<span class="t" style="left:1179.00px;top:66.00px;font-size:19.5px;letter-spacing:0.1px;color:#484644;">Help</span>
<span class="t" style="left:1816.90px;top:64.00px;font-size:20px;letter-spacing:-0.725px;color:#b7472a;-webkit-text-stroke:0.7px #b7472a;">Share</span>
<span class="t" style="left:22.20px;top:161.00px;font-size:17.5px;letter-spacing:-1.05px;color:#a9a7a5;">Paste</span>
<span class="t" style="left:24.20px;top:219.70px;font-size:15.5px;letter-spacing:0.188px;color:#444444;">Clipboard</span>
<span class="t" style="left:167.20px;top:160.00px;font-size:17.5px;letter-spacing:-0.35px;color:#444444;">New</span>
<span class="t" style="left:157.80px;top:184.00px;font-size:17.5px;letter-spacing:-0.55px;color:#444444;">Slide</span>
<span class="t" style="left:248.20px;top:113.00px;font-size:17.5px;letter-spacing:-0.1px;color:#444444;">Layout</span>
<span class="t" style="left:248.40px;top:149.00px;font-size:17.5px;letter-spacing:-1.1px;color:#444444;">Reset</span>
<span class="t" style="left:249.20px;top:185.00px;font-size:17.5px;letter-spacing:-0.317px;color:#444444;">Section</span>
<span class="t" style="left:222.40px;top:219.70px;font-size:15.5px;letter-spacing:-0.46px;color:#444444;">Slides</span>
<span class="t" style="left:524.80px;top:219.70px;font-size:15.5px;letter-spacing:-0.233px;color:#444444;">Font</span>
<span class="t" style="left:869.80px;top:219.70px;font-size:15.5px;letter-spacing:-0.188px;color:#444444;">Paragraph</span>
<span class="t" style="left:1298.90px;top:160.00px;font-size:17.5px;letter-spacing:0.183px;color:#444444;">Arrange</span>
<span class="t" style="left:1300.70px;top:219.70px;font-size:15.5px;letter-spacing:0.383px;color:#444444;">Drawing</span>
<span class="t" style="left:1378.50px;top:160.00px;font-size:17.5px;letter-spacing:-0.2px;color:#a9a7a5;">Quick</span>
<span class="t" style="left:1369.90px;top:184.00px;font-size:17.5px;letter-spacing:-1.0px;color:#a9a7a5;">Styles</span>
<span class="t" style="left:1467.90px;top:110.00px;font-size:17.5px;letter-spacing:-0.344px;color:#a9a7a5;">Shape Fill</span>
<span class="t" style="left:1467.90px;top:144.00px;font-size:17.5px;letter-spacing:-0.083px;color:#a9a7a5;">Shape Outline</span>
<span class="t" style="left:1467.90px;top:178.00px;font-size:17.5px;letter-spacing:-0.417px;color:#a9a7a5;">Shape Effects</span>
<span class="t" style="left:1658.20px;top:110.00px;font-size:17.5px;letter-spacing:-0.5px;color:#444444;">Find</span>
<span class="t" style="left:1658.20px;top:144.00px;font-size:17.5px;letter-spacing:-0.733px;color:#444444;">Replace</span>
<span class="t" style="left:1658.90px;top:178.00px;font-size:17.5px;letter-spacing:-0.86px;color:#444444;">Select</span>
<span class="t" style="left:1663.90px;top:219.70px;font-size:15.5px;letter-spacing:0.133px;color:#444444;">Editing</span>
<span class="t" style="left:366.00px;top:169.00px;font-size:18.5px;letter-spacing:0px;color:#a9a7a5;font-weight:700;">B</span>
<span class="t" style="left:402.50px;top:168.00px;font-size:19px;letter-spacing:0px;color:#a9a7a5;font-style:italic;font-family:'Liberation Serif', serif;">I</span>
<span class="t" style="left:432.20px;top:169.00px;font-size:18px;letter-spacing:0px;color:#a9a7a5;">U</span>
<span class="t" style="left:466.60px;top:168.00px;font-size:19px;letter-spacing:0px;color:#a9a7a5;text-shadow:1.2px 1.2px 0 #d8d6d4;">S</span>
<span class="t" style="left:497.50px;top:170.00px;font-size:17px;letter-spacing:1.5px;color:#a9a7a5;">ab</span>
<span class="t" style="left:530.30px;top:166.20px;font-size:17.5px;letter-spacing:1.5px;color:#a9a7a5;">AV</span>
<span class="t" style="left:584.80px;top:170.50px;font-size:19.5px;letter-spacing:-0.6px;color:#a9a7a5;">Aa</span>
<span class="t" style="left:649.50px;top:115.50px;font-size:26px;letter-spacing:0px;color:#a9a7a5;">A</span>
<span class="t" style="left:686.00px;top:121.50px;font-size:19.5px;letter-spacing:0px;color:#a9a7a5;">A</span>
<span class="t" style="left:723.30px;top:115.50px;font-size:26px;letter-spacing:0px;color:#a9a7a5;">A</span>
<span class="t" style="left:706.00px;top:165.40px;font-size:22px;letter-spacing:0px;color:#a9a7a5;">A</span>
<span class="t" style="left:836.00px;top:118.40px;font-size:8px;letter-spacing:0px;color:#aaa8a6;">1</span>
<span class="t" style="left:835.00px;top:127.30px;font-size:8px;letter-spacing:0px;color:#aaa8a6;">2</span>
<span class="t" style="left:835.00px;top:136.40px;font-size:8px;letter-spacing:0px;color:#aaa8a6;">3</span>
<span class="t" style="left:1099.00px;top:113.20px;font-size:13.5px;letter-spacing:0px;color:#1e8ad2;font-weight:700;">A</span>
<span class="t" style="left:1638.90px;top:137.60px;font-size:15px;letter-spacing:0px;color:#a93dc4;">b</span>
<span class="t" style="left:1644.90px;top:148.70px;font-size:15px;letter-spacing:0px;color:#1e8ad2;">c</span>
<span class="t" style="left:10.60px;top:997.25px;font-size:16px;letter-spacing:-0.436px;color:#444444;">Slide 1 of 1</span>
<span class="t" style="left:134.50px;top:997.25px;font-size:16px;letter-spacing:-0.188px;color:#444444;">English (Nigeria)</span>
<span class="t" style="left:300.75px;top:997.25px;font-size:16px;letter-spacing:-0.292px;color:#444444;">Accessibility: Good to go</span>
<span class="t" style="left:1189.75px;top:997.25px;font-size:16px;letter-spacing:-0.438px;color:#444444;">Notes</span>
<span class="t" style="left:1285.75px;top:997.25px;font-size:16px;letter-spacing:-0.393px;color:#444444;">Comments</span>
<span class="t" style="left:1842.75px;top:997.00px;font-size:16px;letter-spacing:-1.0px;color:#444444;">67%</span>
<span class="t" style="left:481.10px;top:512.00px;font-size:32px;letter-spacing:0.675px;color:#000;font-weight:700;-webkit-text-stroke:0.35px #000;">Click</span>
<span class="t" style="left:568.40px;top:512.00px;font-size:32px;letter-spacing:2.1px;color:#000;font-weight:700;-webkit-text-stroke:0.35px #000;">on</span>
<span class="t" style="left:617.80px;top:512.00px;font-size:32px;letter-spacing:1.8px;color:#000;font-weight:700;-webkit-text-stroke:0.35px #000;">New</span>
<span class="t" style="left:699.00px;top:512.00px;font-size:32px;letter-spacing:0.95px;color:#000;font-weight:700;-webkit-text-stroke:0.35px #000;">Slide</span>
<span class="t" style="left:835.60px;top:530.50px;font-size:73px;letter-spacing:-3.3px;color:#000;-webkit-text-stroke:1.0px #fff;">Click</span>
<span class="t" style="left:1000.90px;top:530.50px;font-size:73px;letter-spacing:6.0px;color:#000;-webkit-text-stroke:1.0px #fff;">to</span>
<span class="t" style="left:1086.30px;top:530.50px;font-size:73px;letter-spacing:-0.95px;color:#000;-webkit-text-stroke:1.0px #fff;">add</span>
<span class="t" style="left:1225.80px;top:530.50px;font-size:73px;letter-spacing:2.925px;color:#000;-webkit-text-stroke:1.0px #fff;">title</span>
<span class="t" style="left:966.50px;top:636.80px;font-size:27.4px;letter-spacing:-0.2px;color:#000;">Click</span>
<span class="t" style="left:1034.30px;top:636.80px;font-size:27.4px;letter-spacing:2.9px;color:#000;">to</span>
<span class="t" style="left:1067.60px;top:636.80px;font-size:27.4px;letter-spacing:1.2px;color:#000;">add</span>
<span class="t" style="left:1125.10px;top:636.80px;font-size:27.4px;letter-spacing:1.343px;color:#000;">subtitle</span>
</div>
<div class="a" id="homebox"></div>
</body></html>
